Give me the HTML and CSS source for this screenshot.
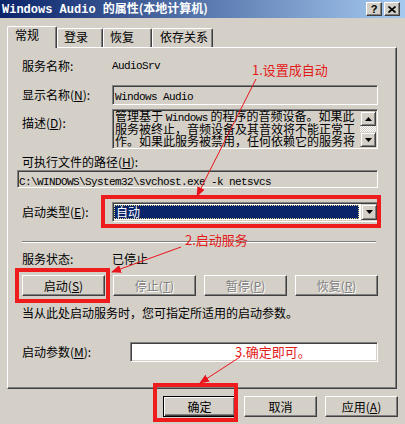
FILE: index.html
```html
<!DOCTYPE html>
<html>
<head>
<meta charset="utf-8">
<link rel="stylesheet" href="styles.css">
</head>
<body>
<div class="titlebar">
  <span class="title"><span class="tl">Windows Audio </span>的属性(本地计算机)</span>
  <div class="tbtns">
    <span class="tbtn q">?</span>
    <span class="tbtn"><svg width="8" height="7" viewBox="0 0 8 7"><path d="M0.5 0.5 L7.5 6.5 M7.5 0.5 L0.5 6.5" stroke="#000" stroke-width="1.7"/></svg></span>
  </div>
</div>
<div class="main">
  <div class="tabs">
    <div class="tab sel w1">常规</div>
    <div class="tab w2">登录</div>
    <div class="tab w3">恢复</div>
    <div class="tab w4">依存关系</div>
  </div>
  <div class="panel">
    <div class="row r1">
      <span class="lbl">服务名称:</span>
      <span class="mono">AudioSrv</span>
    </div>
    <div class="row r2">
      <span class="lbl">显示名称(<u>N</u>):</span>
      <div class="edit ro grow"><span class="mono">Windows Audio</span></div>
    </div>
    <div class="row r3">
      <span class="lbl dl">描述(<u>D</u>):</span>
      <div class="edit ro grow desc">
        <div class="dtext">
          <div class="dline">管理基于 <span class="mono">Windows</span> 的程序的音频设备。如果此</div>
          <div class="dline">服务被终止，音频设备及其音效将不能正常工</div>
          <div class="dline">作。如果此服务被禁用，任何依赖它的服务将</div>
        </div>
        <div class="sbar">
          <div class="sbtn"><svg width="7" height="4" viewBox="0 0 7 4"><polygon points="0,4 3.5,0 7,4" fill="#000"/></svg></div>
          <div class="strack"></div>
          <div class="sbtn"><svg width="7" height="4" viewBox="0 0 7 4"><polygon points="0,0 7,0 3.5,4" fill="#000"/></svg></div>
        </div>
      </div>
    </div>
    <div class="row r4"><span>可执行文件的路径(<u>H</u>):</span></div>
    <div class="row r5">
      <div class="edit ro path"><span class="mono">C:\WINDOWS\System32\svchost.exe -k netsvcs</span></div>
    </div>
    <div class="row r6">
      <span class="lbl">启动类型(<u>E</u>):</span>
      <div class="edit combo grow">
        <div class="csel">自动</div>
        <div class="cbtn"><svg width="7" height="4" viewBox="0 0 7 4"><polygon points="0,0 7,0 3.5,4" fill="#000"/></svg></div>
      </div>
    </div>
    <div class="sep"></div>
    <div class="row r7">
      <span class="lbl">服务状态:</span>
      <span>已停止</span>
    </div>
    <div class="row r8 btnrow">
      <div class="btn sb">启动(<u>S</u>)</div>
      <div class="btn sb dis">停止(<u>T</u>)</div>
      <div class="btn sb dis">暂停(<u>P</u>)</div>
      <div class="btn sb dis">恢复(<u>R</u>)</div>
    </div>
    <div class="row r9"><span>当从此处启动服务时，您可指定所适用的启动参数。</span></div>
    <div class="row r10">
      <span class="lbl lw">启动参数(<u>M</u>):</span>
      <div class="edit grow wbg"></div>
    </div>
  </div>
  <div class="footer">
    <div class="btn fb def">确定</div>
    <div class="btn fb">取消</div>
    <div class="btn fb">应用(<u>A</u>)</div>
  </div>
</div>

<div class="overlay">
  <div class="rbox rb1"></div>
  <div class="rbox rb2"></div>
  <div class="rbox rb3"></div>
  <span class="note n1">1.设置成自动</span>
  <span class="note n2">2.启动服务</span>
  <span class="note n3">3.确定即可。</span>
  <svg class="arrows" width="405" height="424" viewBox="0 0 405 424">
    <defs>
      <marker id="ah" markerWidth="10" markerHeight="8" refX="9" refY="4" orient="auto" markerUnits="userSpaceOnUse">
        <polygon points="0,0 10,4 0,8" fill="#E8141B"/>
      </marker>
    </defs>
    <line x1="256" y1="79" x2="197" y2="196" stroke="#E8141B" stroke-width="1" marker-end="url(#ah)"/>
    <line x1="181" y1="247" x2="112" y2="272" stroke="#E8141B" stroke-width="1" marker-end="url(#ah)"/>
    <line x1="240" y1="357" x2="200" y2="383" stroke="#E8141B" stroke-width="1" marker-end="url(#ah)"/>
  </svg>
</div>
</body>
</html>
```
FILE: styles.css
```css
* { box-sizing: border-box; margin: 0; padding: 0; }
html, body { width: 405px; height: 424px; overflow: hidden; }
body {
  background: #D4D0C8;
  font-family: "Noto Sans CJK SC", "Liberation Sans", sans-serif;
  font-size: 12px;
  line-height: 12px;
  color: #000;
  position: relative;
}
u { text-decoration: underline; }
.mono {
  font-family: "Liberation Mono", "Noto Sans CJK SC", monospace;
  font-size: 11px;
  letter-spacing: -0.6px;
}

.titlebar {
  height: 18px;
  background: linear-gradient(to right, #0A246A, #A6CAF0);
  display: flex;
  align-items: center;
  justify-content: space-between;
  padding: 0 5px 0 2px;
}
.title { color: #fff; font-weight: bold; white-space: nowrap; font-size: 12px; }
.title .tl { font-family: "Liberation Mono", monospace; }
.tbtns { display: flex; gap: 2px; }
.tbtn {
  width: 16px; height: 14px;
  background: #D4D0C8;
  border: 1px solid;
  border-color: #fff #404040 #404040 #fff;
  box-shadow: inset -1px -1px #808080;
  display: flex; align-items: center; justify-content: center;
}
.tbtn.q { font: bold 11px "Liberation Sans", sans-serif; line-height: 12px; }

.main { padding-top: 8px; }
.tabs {
  display: flex;
  align-items: flex-end;
  height: 21px;
  padding-left: 7px;
  position: relative;
  z-index: 1;
}
.tab {
  height: 19px;
  border-left: 1px solid #fff;
  border-top: 1px solid #fff;
  border-right: 1px solid #404040;
  box-shadow: inset -1px 0 #808080;
  border-radius: 2px 2px 0 0;
  padding: 2px 0 0 6px;
  white-space: nowrap;
  background: #D4D0C8;
}
.tab.sel { height: 22px; margin-bottom: -1px; padding-left: 7px; }
.w1 { width: 50px; }
.w2 { width: 46px; }
.w3 { width: 49px; padding-left: 6px; }
.w4 { width: 61px; padding-left: 7px; }

.panel {
  margin-left: 7px;
  width: 390px;
  height: 342px;
  border-left: 1px solid #fff;
  border-top: 1px solid #fff;
  border-right: 1px solid #404040;
  border-bottom: 1px solid #404040;
  box-shadow: inset -1px -1px #808080;
  padding: 0 18px 0 14px;
}
.row { display: flex; align-items: center; }
.lbl { width: 90px; flex: none; white-space: nowrap; }
.lw { width: 108px; }
.grow { flex: 1; }
.r1 { margin-top: 9px; height: 18px; }
.r2 { margin-top: 10px; height: 20px; }
.r3 { margin-top: 4px; height: 40px; align-items: flex-start; }
.dl { margin-top: 8px; }
.r4 { margin-top: 7px; height: 12px; }
.r5 { margin-top: 2px; height: 18px; }
.r6 { margin-top: 14px; height: 20px; }
.sep {
  margin-top: 19px;
  height: 2px;
  width: 354px;
  border-top: 1px solid #808080;
  border-bottom: 1px solid #fff;
}
.r7 { margin-top: 10px; height: 12px; }
.r8 { margin-top: 10px; height: 21px; }
.r9 { margin-top: 11px; height: 12px; }
.r10 { margin-top: 23px; height: 20px; }

.edit {
  height: 100%;
  border: 1px solid;
  border-color: #808080 #fff #fff #808080;
  box-shadow: inset 1px 1px #404040, inset -1px -1px #D4D0C8;
  padding: 3px 0 0 2px;
  white-space: nowrap;
  overflow: hidden;
}
.ro { background: #D4D0C8; }
.wbg { background: #fff; }
.desc { display: flex; padding: 0 1px 0 2px; }
.dtext { flex: 1; overflow: hidden; padding-top: 0; }
.dline { height: 12.5px; line-height: 12.5px; white-space: nowrap; font-size: 12px; }
.sbar { width: 16px; display: flex; flex-direction: column; padding: 1px 0; }
.sbtn {
  height: 15px;
  background: #D4D0C8;
  border: 1px solid;
  border-color: #D4D0C8 #404040 #404040 #D4D0C8;
  box-shadow: inset 1px 1px #fff, inset -1px -1px #808080;
  display: flex; align-items: center; justify-content: center;
}
.strack {
  flex: 1;
  background: repeating-conic-gradient(#fff 0 25%, #D4D0C8 0 50%) 0 0 / 2px 2px;
}
.path { margin-left: -5px; width: 362px; padding: 3px 0 0 1px; }

.combo { display: flex; padding: 1px 0 1px 1px; background: #fff; }
.csel {
  flex: 1;
  margin: 1px 2px 1px 0;
  background: #0A246A;
  color: #fff;
  outline: 1px dotted #E0D890;
  outline-offset: -1px;
  padding: 1px 0 0 2px;
}
.cbtn {
  width: 16px;
  background: #D4D0C8;
  border: 1px solid;
  border-color: #D4D0C8 #404040 #404040 #D4D0C8;
  box-shadow: inset 1px 1px #fff, inset -1px -1px #808080;
  display: flex; align-items: center; justify-content: center;
}

.btnrow { gap: 8px; }
.btn {
  height: 21px;
  background: #D4D0C8;
  border: 1px solid;
  border-color: #fff #404040 #404040 #fff;
  box-shadow: inset -1px -1px #808080;
  display: flex; align-items: center; justify-content: center;
  white-space: nowrap;
}
.sb { width: 83px; }
.dis { color: #808080; text-shadow: 1px 1px #fff; }
.footer {
  margin-top: 7px;
  display: flex;
  justify-content: flex-end;
  gap: 8px;
  padding-right: 7px;
}
.fb { width: 73px; }
.def {
  border-color: #000;
  box-shadow: inset 1px 1px #fff, inset -1px -1px #404040, inset -2px -2px #808080;
}

.overlay {
  position: absolute;
  left: 0; top: 0;
  width: 405px; height: 424px;
  pointer-events: none;
}
.arrows { position: absolute; left: 0; top: 0; }
.rbox { position: absolute; border: 4px solid #EE1C1C; }
.rb1 { left: 101px; top: 195px; width: 280px; height: 33px; }
.rb2 { left: 15px; top: 268px; width: 95px; height: 35px; }
.rb3 { left: 153px; top: 383px; width: 85px; height: 39px; }
.note {
  position: absolute;
  color: #E31A1A;
  font-size: 13px;
  line-height: 14px;
  white-space: nowrap;
}
.n1 { left: 252px; top: 63px; }
.n2 { left: 185px; top: 233px; }
.n3 { left: 235px; top: 345px; }
```
